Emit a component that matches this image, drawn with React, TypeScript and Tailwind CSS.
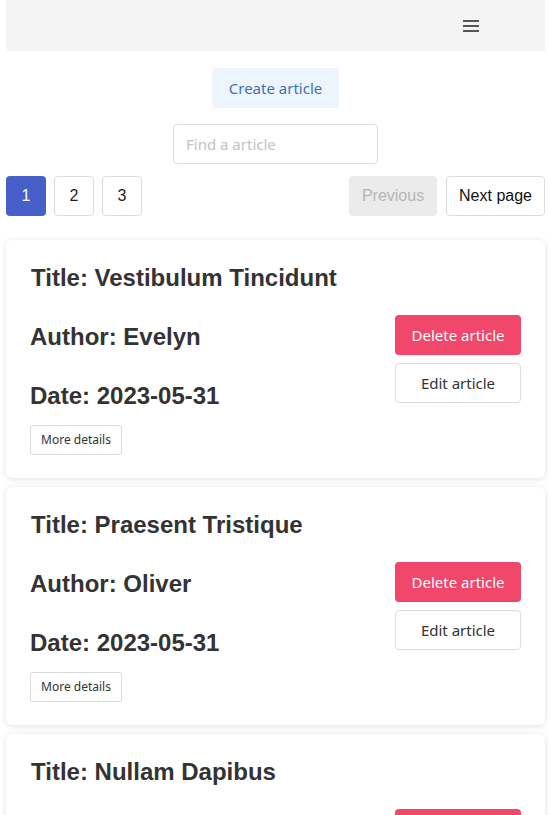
import React from "react";

interface Article {
  id: number;
  title: string;
  author: string;
  date: string;
}

const articles: Article[] = [
  { id: 1, title: "Vestibulum Tincidunt", author: "Evelyn", date: "2023-05-31" },
  { id: 2, title: "Praesent Tristique", author: "Oliver", date: "2023-05-31" },
  { id: 3, title: "Nullam Dapibus", author: "Sophia", date: "2023-05-31" },
];

const uiFont = "font-['Noto_Sans','Open_Sans',sans-serif]";
const arial = "font-['Liberation_Sans',Arial,sans-serif]";

const ArticleCard: React.FC<{ article: Article }> = ({ article }) => {
  return (
    <div className="bg-white rounded-md shadow-[0_1px_6px_rgba(0,0,0,0.12)] px-6 pt-[23px] pb-[23px] flex items-center justify-between">
      <div className={`${arial} text-[#333] font-bold text-2xl leading-[29px]`}>
        <h2 className="mb-[30px] pl-[1px]">Title: {article.title}</h2>
        <h2 className="mb-[30px]">Author: {article.author}</h2>
        <h2 className="mb-[15px]">Date: {article.date}</h2>
        <button className={`${uiFont} block font-normal text-[12px] leading-none text-[#333] border border-[#dcdcdc] rounded-[2px] w-[92px] h-[30px]`}>
          More details
        </button>
      </div>
      <div className={`${uiFont} flex flex-col gap-2 w-[126px]`}>
        <button className="h-10 rounded-[4px] bg-[#f1476b] text-white text-[15px]">
          Delete article
        </button>
        <button className="h-10 rounded-[4px] bg-white border border-[#dcdcdc] text-[#333] text-[15px]">
          Edit article
        </button>
      </div>
    </div>
  );
};

export default function App() {
  return (
    <div className="min-h-screen bg-white pl-[6px] pr-[5px]">
      <header className="h-[51px] bg-[#f4f4f4] flex items-center justify-end pr-[66px]">
        <button aria-label="menu" className="flex flex-col gap-[3.5px] pt-[1px]">
          <span className="block w-4 h-[1.5px] bg-[#555]" />
          <span className="block w-4 h-[1.5px] bg-[#555]" />
          <span className="block w-4 h-[1.5px] bg-[#555]" />
        </button>
      </header>

      <div className="flex justify-center mt-[17px]">
        <button className={`${uiFont} w-[127px] h-10 rounded-[4px] bg-[#eef4fb] text-[#3b72b6] text-[15px]`}>
          Create article
        </button>
      </div>

      <div className="flex justify-center mt-4">
        <input
          placeholder="Find a article"
          className={`${uiFont} w-[205px] h-10 rounded-[4px] border border-[#dcdcdc] px-3 text-[15px] placeholder:text-[#c2c2c2] outline-none`}
        />
      </div>

      <div className={`${arial} flex items-center justify-between mt-[12px] text-base`}>
        <div className="flex gap-2">
          <button className="w-10 h-10 rounded-[4px] bg-[#4760c9] text-white">1</button>
          <button className="w-10 h-10 rounded-[4px] border border-[#dcdcdc] text-[#222]">2</button>
          <button className="w-10 h-10 rounded-[4px] border border-[#dcdcdc] text-[#222]">3</button>
        </div>
        <div className="flex gap-[9px]">
          <button className="w-[88px] h-10 rounded-[4px] bg-[#ebebeb] text-[#b5b5b5]">Previous</button>
          <button className="w-[99px] h-10 rounded-[4px] border border-[#dcdcdc] text-[#111]">Next page</button>
        </div>
      </div>

      <div className="flex flex-col gap-[9px] mt-6 pb-6">
        {articles.map((a) => (
          <ArticleCard key={a.id} article={a} />
        ))}
      </div>
    </div>
  );
}
